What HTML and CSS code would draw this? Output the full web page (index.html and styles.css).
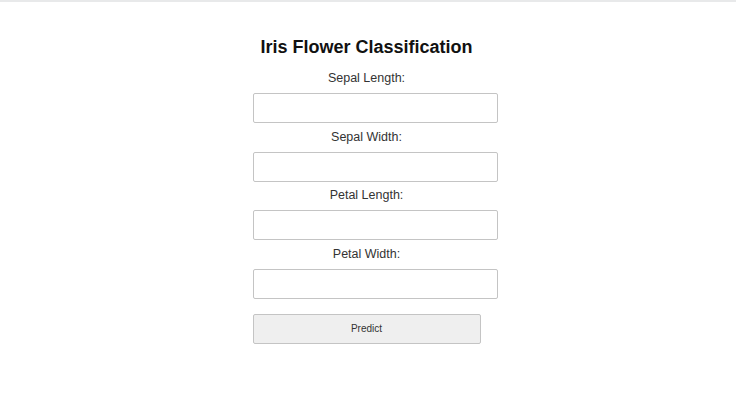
FILE: index.html
```html
<!DOCTYPE html>
<html>
<head>
<meta charset="utf-8">
<link rel="stylesheet" href="styles.css">
</head>
<body>
<div class="topline"></div>
<main class="page">
  <form class="form">
    <h1 class="title">Iris Flower Classification</h1>
    <label class="label">Sepal Length:</label>
    <input class="field" type="text">
    <label class="label">Sepal Width:</label>
    <input class="field" type="text">
    <label class="label">Petal Length:</label>
    <input class="field" type="text">
    <label class="label">Petal Width:</label>
    <input class="field" type="text">
    <button class="btn" type="button">Predict</button>
  </form>
</main>
</body>
</html>
```
FILE: styles.css
```css
html, body {
  margin: 0;
  padding: 0;
  background: #fff;
  font-family: "Liberation Sans", Arial, sans-serif;
  color: #222;
}
.topline {
  height: 2px;
  background: #e8e9ea;
}
.page {
  display: flex;
  justify-content: center;
  padding-right: 3px;
}
.form {
  width: 228px;
  display: flex;
  flex-direction: column;
  align-items: flex-start;
  padding-top: 35px;
}
.title {
  align-self: center;
  margin: 0 0 14px;
  font-size: 18px;
  font-weight: bold;
  line-height: 20px;
  color: #111;
  white-space: nowrap;
}
.label {
  align-self: center;
  font-size: 12.5px;
  line-height: 14px;
  color: #333;
  margin-bottom: 8px;
}
.field {
  box-sizing: border-box;
  width: 245px;
  height: 30px;
  border: 1.5px solid #c4c4c4;
  border-radius: 2px;
  background: #fff;
  margin: 0 0 6.5px;
}
.btn {
  box-sizing: border-box;
  width: 228px;
  height: 30px;
  margin-top: 8.5px;
  border: 1.5px solid #c4c4c4;
  border-radius: 2px;
  background: #efefef;
  font-family: "Liberation Sans", Arial, sans-serif;
  font-size: 10px;
  color: #333;
}
```
